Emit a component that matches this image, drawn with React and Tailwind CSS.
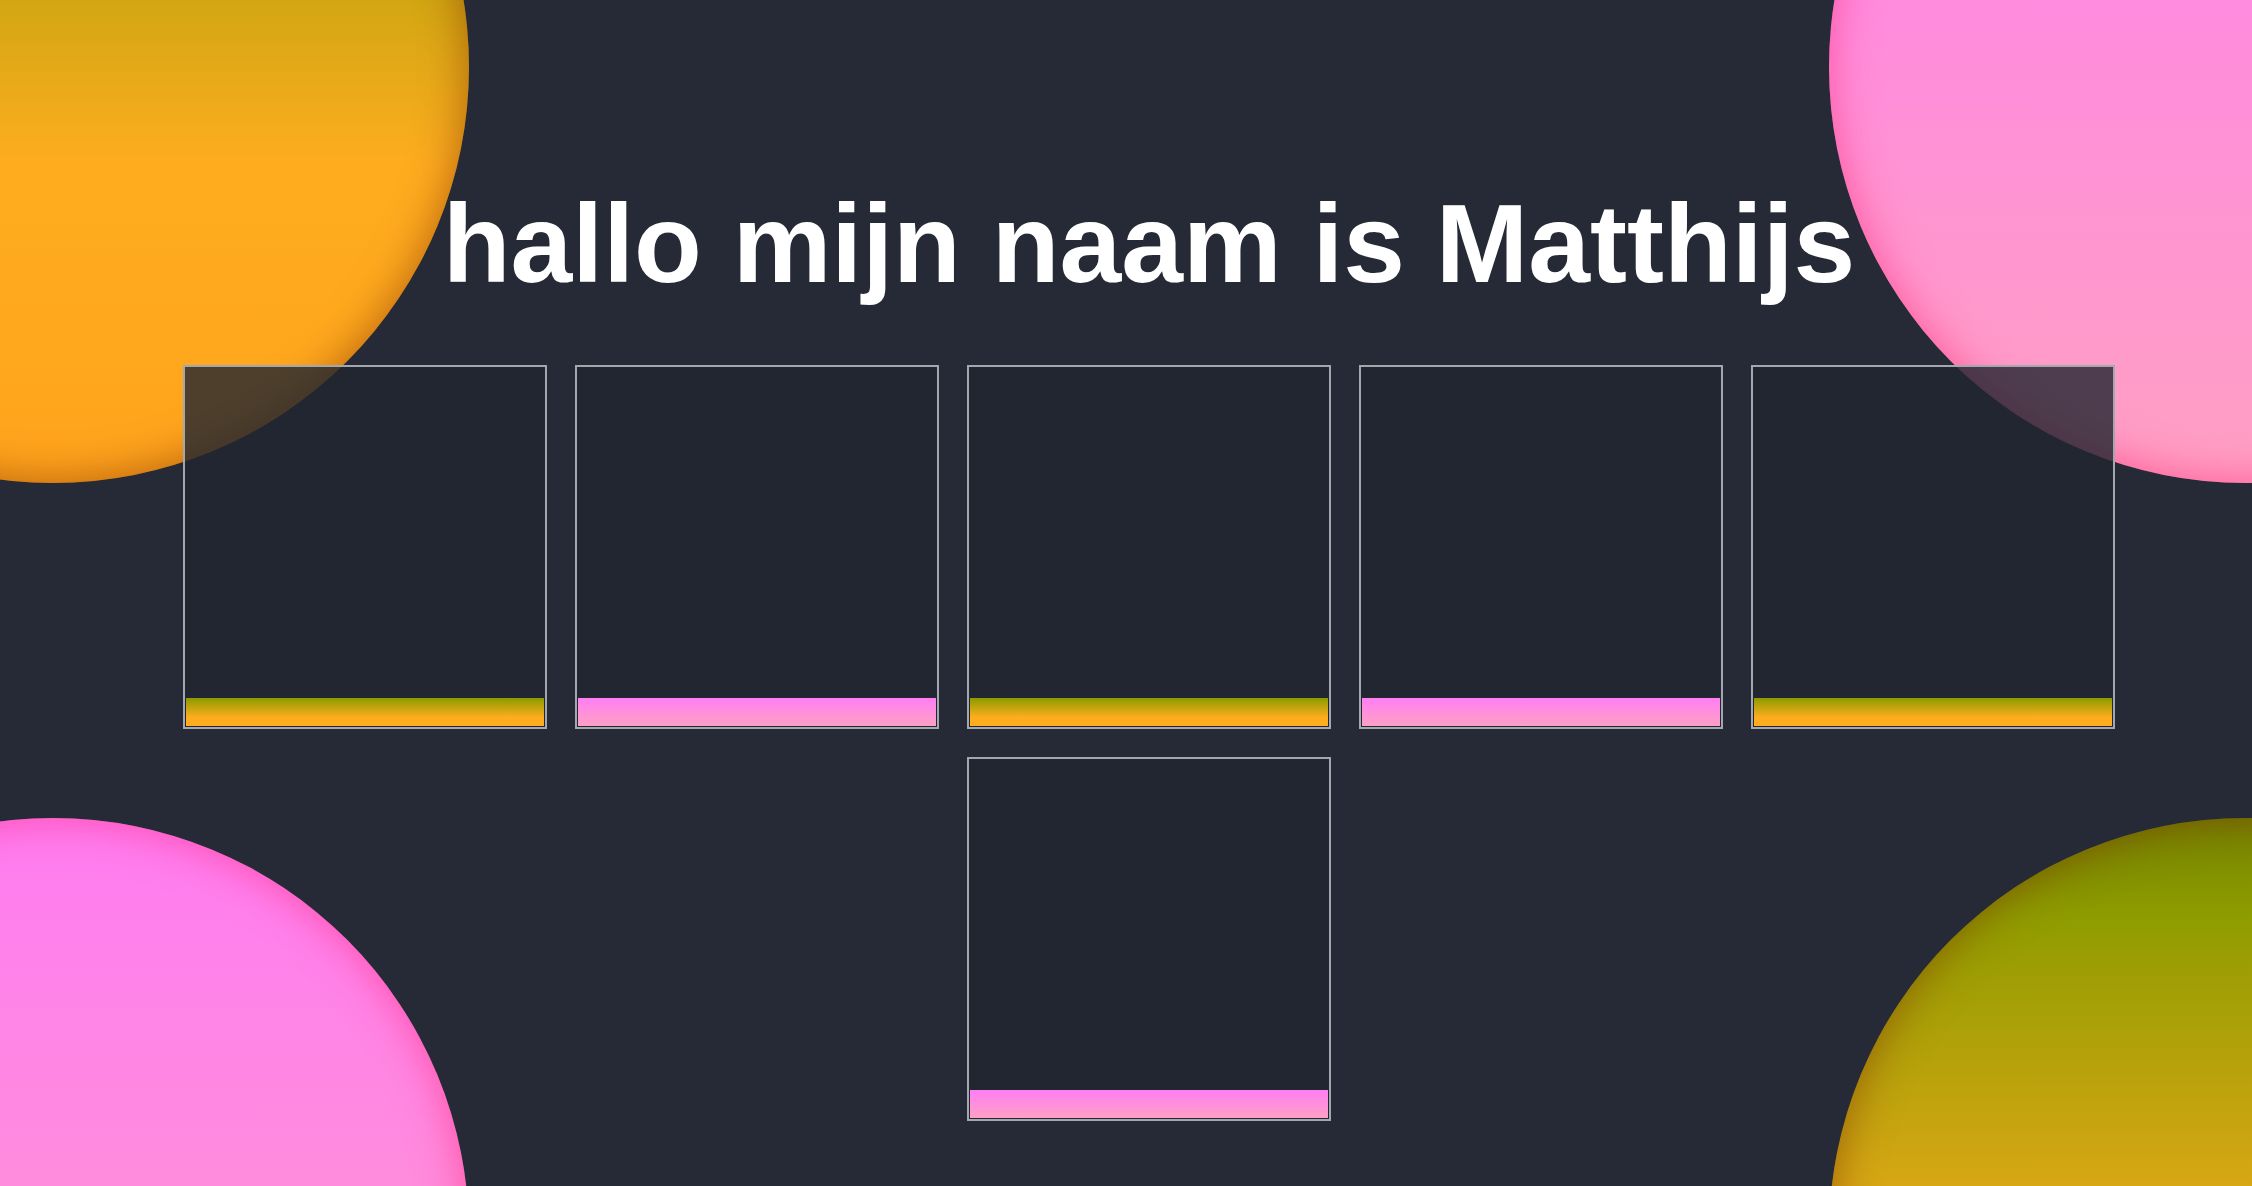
const cards = ["olive", "pink", "olive", "pink", "olive", "pink"];

function Blob({ className, kind }) {
  const look =
    kind === "olive"
      ? "bg-[linear-gradient(to_bottom,#748400,#8f9c00_12%,#ffad1f_62%,#ffa31c)] shadow-[inset_0_0_44px_rgba(120,40,0,0.55)]"
      : "bg-[linear-gradient(to_bottom,#ff7cf2,#ffa0c2)] shadow-[inset_0_0_44px_rgba(255,40,120,0.6)]";
  return <div className={`absolute w-[832px] h-[832px] rounded-full ${look} ${className}`} />;
}

function Card({ kind }) {
  return (
    <div className="w-[364px] h-[364px] border-2 border-[#a3a7ae] bg-[#20262f]/80 p-px flex flex-col justify-end">
      <div
        className={
          kind === "olive"
            ? "h-[28px] bg-[linear-gradient(to_bottom,#8a9c00,#ffad1f_70%)]"
            : "h-[28px] bg-[linear-gradient(to_bottom,#ff7ef4,#ffa0c4)]"
        }
      />
    </div>
  );
}

export default function App() {
  return (
    <div className="w-full h-[1186px] overflow-hidden bg-[#262a36]">
      <div className="relative w-[2298px] h-full">
        {/* decorative blobs in the corners */}
        <Blob kind="olive" className="left-[-363px] top-[-349px]" />
        <Blob kind="pink" className="left-[1829px] top-[-349px]" />
        <Blob kind="pink" className="left-[-363px] top-[818px]" />
        <Blob kind="olive" className="left-[1829px] top-[818px]" />

        <div className="relative z-10 flex flex-col items-center pt-[189px]">
          <h1 className="text-[111px] leading-none font-bold text-white mb-[65px] font-['Liberation_Sans',Arial,sans-serif]">
            hallo mijn naam is Matthijs
          </h1>
          <div className="w-[1932px] flex flex-wrap justify-center gap-[28px]">
            {cards.map((kind, i) => (
              <Card key={i} kind={kind} />
            ))}
          </div>
        </div>
      </div>
    </div>
  );
}
